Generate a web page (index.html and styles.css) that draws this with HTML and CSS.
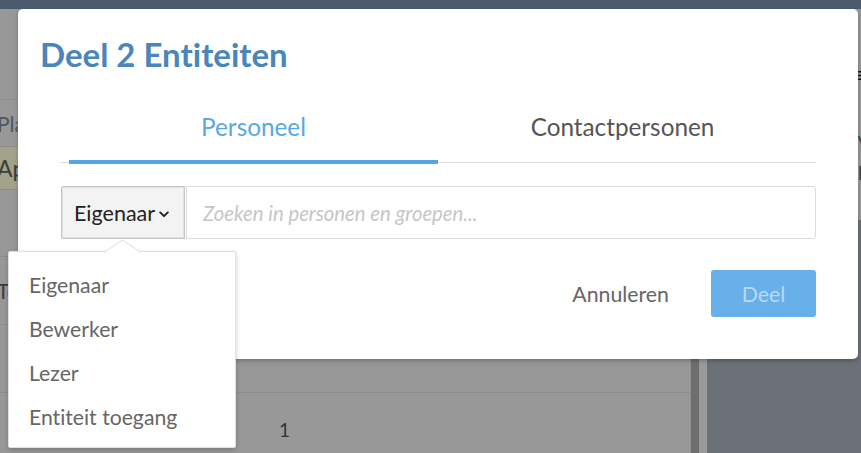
FILE: index.html
```html
<!DOCTYPE html>
<html lang="nl">
<head>
<meta charset="utf-8">
<title>Deel 2 Entiteiten</title>
<link rel="stylesheet" href="styles.css">
</head>
<body>
<div class="app">
  <div class="topbar"></div>
  <div class="main">
    <div class="content">
      <div class="row row-head"></div>
      <div class="row row-a"><span class="cell">Planning</span></div>
      <div class="row row-b"><span class="cell">Apparatuur</span></div>
      <div class="row row-c"></div>
      <div class="row row-d"><span class="cell">Totaal</span></div>
      <div class="row row-e"></div>
      <div class="row row-f"><span class="num">1</span></div>
    </div>
    <div class="scroll"></div>
    <div class="gutter"></div>
    <div class="side">
      <div class="side-top">
        <div class="side-icon">≡</div>
        <div class="side-text">V<br>E</div>
      </div>
    </div>
  </div>
</div>

<div class="modal">
  <h1 class="title">Deel 2 Entiteiten</h1>
  <div class="body">
    <div class="tabs">
      <div class="tab active">Personeel</div>
      <div class="tab">Contactpersonen</div>
    </div>
    <div class="search">
      <button class="role">Eigenaar <svg class="chev" width="10" height="7" viewBox="0 0 10 7"><path d="M1.2 1.4 L5 5.2 L8.8 1.4" fill="none" stroke="#222" stroke-width="1.9" stroke-linecap="round" stroke-linejoin="round"/></svg></button>
      <div class="field">Zoeken in personen en groepen...</div>
    </div>
    <div class="actions">
      <button class="btn-cancel">Annuleren</button>
      <button class="btn-share">Deel</button>
    </div>
  </div>
</div>

<div class="menu">
  <svg class="notch" width="40" height="14" viewBox="0 0 40 14"><path d="M1 13.5 L19.5 1 L38 13.5" fill="#fff" stroke="#dcdcdc" stroke-width="1"/></svg>
  <div class="item">Eigenaar</div>
  <div class="item">Bewerker</div>
  <div class="item">Lezer</div>
  <div class="item">Entiteit toegang</div>
</div>
</body>
</html>
```

FILE: styles.css
```css
* { box-sizing: border-box; }
html, body { margin: 0; padding: 0; }
body {
  width: 861px;
  height: 453px;
  overflow: hidden;
  font-family: Lato, "Liberation Sans", sans-serif;
  font-variant-ligatures: none;
  background: #989898;
  position: relative;
}
.app { display: flex; flex-direction: column; height: 453px; }
.topbar { height: 9px; background: #4b5a6b; }
.main { flex: 1; display: flex; }
.content { width: 691px; background: #989898; display: flex; flex-direction: column; border-right: 1px solid #8e8e8e; }
.row { border-bottom: 1px solid #8d8d8d; display: flex; align-items: center; color: #4e5660; font-size: 21px; }
.row-head { height: 91px; }
.row-a { height: 47px; }
.row-b { height: 43px; background: #a3a28a; color: #3e3e38; font-size: 23px; }
.row-c { height: 67px; }
.row-d { height: 68px; color: #3c3c3c; }
.row-e { height: 68px; }
.row-f { flex: 1; border-bottom: none; }
.cell { margin-left: -3px; }
.num { margin-left: 279px; margin-top: 12px; font-size: 19px; color: #333; }
.scroll { width: 8px; background: #6e6e6e; }
.gutter { width: 8px; background: #9a9a9a; }
.side { flex: 1; background: #6c7178; display: flex; flex-direction: column; }
.side-top { height: 211px; background: #999; border-left: 1px solid #8e8e8e; position: relative; }
.side-icon { position: absolute; right: -8px; top: 52px; font-size: 22px; color: #111; }
.side-text { position: absolute; right: -10px; top: 118px; font-size: 20px; line-height: 30px; color: #444; }

.modal {
  position: absolute;
  left: 18px;
  top: 9px;
  width: 840px;
  height: 350px;
  background: #fff;
  border-radius: 5px;
  box-shadow: 0 2px 4px rgba(0,0,0,0.25);
  padding: 25px 22px 0;
}
.title {
  margin: 0;
  font-size: 33px;
  line-height: 40px;
  font-weight: 700;
  color: #4a86b9;
}
.body { padding: 0 20px; }
.tabs {
  display: flex;
  padding: 0 9px;
  border-bottom: 1px solid #dcdcdc;
}
.tab {
  flex: 1;
  height: 90px;
  margin-bottom: -2px;
  padding-top: 39px;
  text-align: center;
  font-size: 24.3px;
  line-height: 28px;
  color: #555;
  border-bottom: 4px solid transparent;
}
.tab.active { color: #58a8e6; border-bottom-color: #55a6e6; }
.search {
  margin-top: 23px;
  height: 53px;
  display: flex;
}
.role {
  width: 124px;
  margin-left: 1px;
  background: #f3f3f3;
  border: 1px solid #c4c4c4;
  box-shadow: inset 0 0 0 1px #e2e2e2;
  border-radius: 2px 0 0 2px;
  font-family: inherit;
  font-variant-ligatures: none;
  font-size: 21.5px;
  color: #222;
  padding: 0 0 0 12px;
  text-align: left;
  display: flex;
  align-items: center;
  gap: 4px;
}
.chev { margin-top: 3px; }
.field {
  flex: 1;
  margin-left: 1px;
  border: 1px solid #dcdcdc;
  border-radius: 0 3px 3px 0;
  font-size: 20.3px;
  font-style: italic;
  color: #c6c6c6;
  display: flex;
  align-items: center;
  padding-left: 16px;
}
.actions {
  margin-top: 31px;
  display: flex;
  justify-content: flex-end;
  align-items: center;
}
.btn-cancel {
  background: none;
  border: none;
  font-family: inherit;
  font-size: 21.3px;
  color: #666;
  padding: 0;
  margin-right: 42px;
}
.btn-share {
  width: 105px;
  height: 47px;
  background: #68b0ea;
  border: none;
  border-radius: 3px;
  font-family: inherit;
  font-size: 21.3px;
  color: rgba(255,255,255,0.55);
}

.menu {
  position: absolute;
  left: 8px;
  top: 251px;
  width: 228px;
  height: 197px;
  background: #fff;
  border: 1px solid #e0e0e0;
  border-radius: 2px;
  box-shadow: 0 2px 5px rgba(0,0,0,0.2);
  padding: 11px 0 0 20px;
}
.notch { position: absolute; left: 94px; top: -13px; }
.item {
  height: 44px;
  line-height: 44px;
  font-size: 21.2px;
  color: #666;
}
```
